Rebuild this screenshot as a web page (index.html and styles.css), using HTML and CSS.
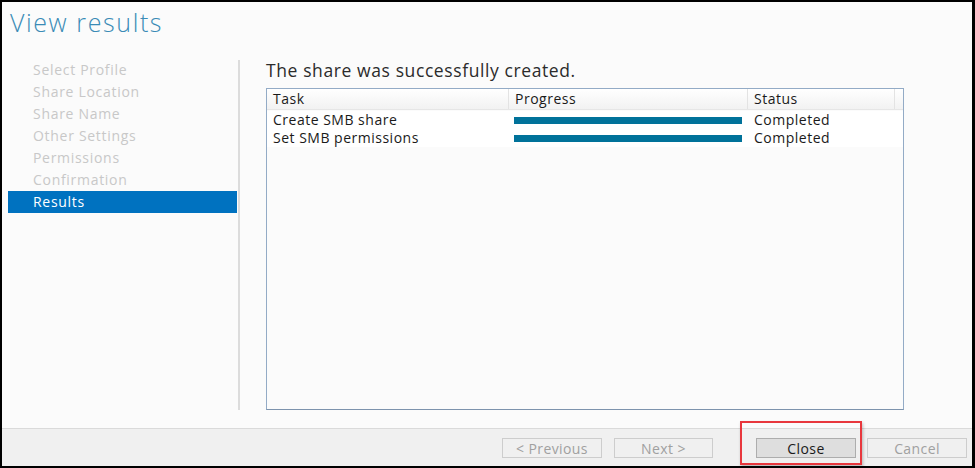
FILE: index.html
```html
<!DOCTYPE html>
<html>
<head>
<meta charset="utf-8">
<link rel="stylesheet" href="styles.css">
</head>
<body>
<div class="window">
  <div class="main">
    <h1 class="title">View results</h1>
    <div class="body">
      <ul class="nav">
        <li>Select Profile</li>
        <li>Share Location</li>
        <li>Share Name</li>
        <li>Other Settings</li>
        <li>Permissions</li>
        <li>Confirmation</li>
        <li class="active">Results</li>
      </ul>
      <div class="divider"></div>
      <div class="content">
        <p class="heading">The share was successfully created.</p>
        <div class="grid">
          <div class="row head">
            <div class="cell c-task">Task</div>
            <div class="cell c-prog">Progress</div>
            <div class="cell c-stat">Status</div>
            <div class="cell c-fill"></div>
          </div>
          <div class="row item">
            <div class="cell c-task">Create SMB share</div>
            <div class="cell c-prog"><div class="bar"></div></div>
            <div class="cell c-stat">Completed</div>
            <div class="cell c-fill"></div>
          </div>
          <div class="row item">
            <div class="cell c-task">Set SMB permissions</div>
            <div class="cell c-prog"><div class="bar"></div></div>
            <div class="cell c-stat">Completed</div>
            <div class="cell c-fill"></div>
          </div>
        </div>
      </div>
    </div>
  </div>
  <div class="footer">
    <button class="btn disabled">&lt; Previous</button>
    <button class="btn disabled btn-next">Next &gt;</button>
    <span class="highlight"><button class="btn primary">Close</button></span>
    <button class="btn disabled">Cancel</button>
  </div>
</div>
</body>
</html>
```
FILE: styles.css
```css
* { box-sizing: border-box; }
html, body { margin: 0; padding: 0; }
body {
  width: 975px;
  height: 468px;
  background: #000;
  font-family: "Open Sans", "Noto Sans", sans-serif;
  overflow: hidden;
}
.window {
  width: 975px;
  height: 468px;
  border-style: solid;
  border-color: #000;
  border-width: 2px 3px 2px 2px;
  display: flex;
  flex-direction: column;
  background: #fbfbfb;
}
.main {
  height: 426px;
  display: flex;
  flex-direction: column;
}
.title {
  margin: 0;
  padding: 4px 0 0 8px;
  height: 57px;
  font-size: 25px;
  font-weight: 300;
  line-height: 32px;
  color: #3a8bb6;
  letter-spacing: 1.6px;
}
.body {
  display: flex;
  height: 351px;
}
.nav {
  list-style: none;
  margin: 0 0 0 6px;
  padding: 0;
  width: 229px;
}
.nav li {
  height: 22px;
  line-height: 22px;
  padding-left: 25px;
  font-size: 14px;
  letter-spacing: 0.7px;
  color: #c8c8c8;
}
.nav li.active {
  background: #0072c0;
  color: #fff;
}
.divider {
  width: 2px;
  margin-left: 1px;
  margin-top: 1px;
  background: #dcdcdc;
}
.content {
  padding-left: 26px;
  display: flex;
  flex-direction: column;
}
.heading {
  margin: 0;
  height: 29px;
  line-height: 22px;
  padding-left: 0;
  font-size: 17.5px;
  letter-spacing: 0.6px;
  color: #2b2b2b;
}
.grid {
  width: 638px;
  height: 322px;
  border: 1px solid #93abc6;
  border-bottom-color: #7d93ad;
  background: #fbfbfb;
}
.row {
  display: flex;
}
.head {
  height: 21px;
  background: linear-gradient(#ffffff, #f2f2f2);
  border-bottom: 1px solid #e6e6e6;
  margin-bottom: 1px;
}
.item {
  height: 18px;
  background: #fff;
}
.cell {
  font-size: 14px;
  letter-spacing: 0.5px;
  color: #1a1a1a;
  line-height: 18px;
  padding-left: 6px;
  white-space: nowrap;
}
.head .cell {
  line-height: 20px;
  border-right: 1px solid #e3e3e3;
}
.head .c-fill { border-right: 0; }
.c-task { width: 242px; }
.c-prog { width: 239px; padding-left: 5px; display: flex; align-items: center; }
.c-stat { width: 147px; padding-left: 6px; }
.c-fill { flex: 1; }
.head .c-prog { display: block; padding-left: 6px; }
.bar {
  width: 228px;
  height: 7px;
  background: #00729a;
}
.footer {
  flex: 1;
  background: #f0f0f0;
  border-top: 1px solid #dadada;
  display: flex;
  align-items: flex-start;
  justify-content: flex-end;
  padding: 9px 5px 0 0;
}
.btn {
  width: 100px;
  height: 20px;
  border: 1px solid #cdcdcd;
  background: #f0f0f0;
  font-family: "Open Sans", "Noto Sans", sans-serif;
  font-size: 14px;
  letter-spacing: 0.4px;
  line-height: 17px;
  padding: 0;
  color: #a0a0a0;
  margin-left: 12px;
}
.btn-next { width: 99px; }
.btn.primary {
  background: #dedede;
  border-color: #adadad;
  color: #1a1a1a;
  margin: 0;
}
.highlight {
  position: relative;
  display: flex;
  margin-left: 43px;
  margin-right: 11px;
}
.highlight::after {
  content: "";
  position: absolute;
  left: -16px;
  right: -6px;
  top: -17px;
  bottom: -7px;
  border: 2px solid #e8373d;
  box-shadow: 1px 2px 3px rgba(0,0,0,0.25);
  pointer-events: none;
}
.footer > .btn:last-child { margin-left: 0; }
```
